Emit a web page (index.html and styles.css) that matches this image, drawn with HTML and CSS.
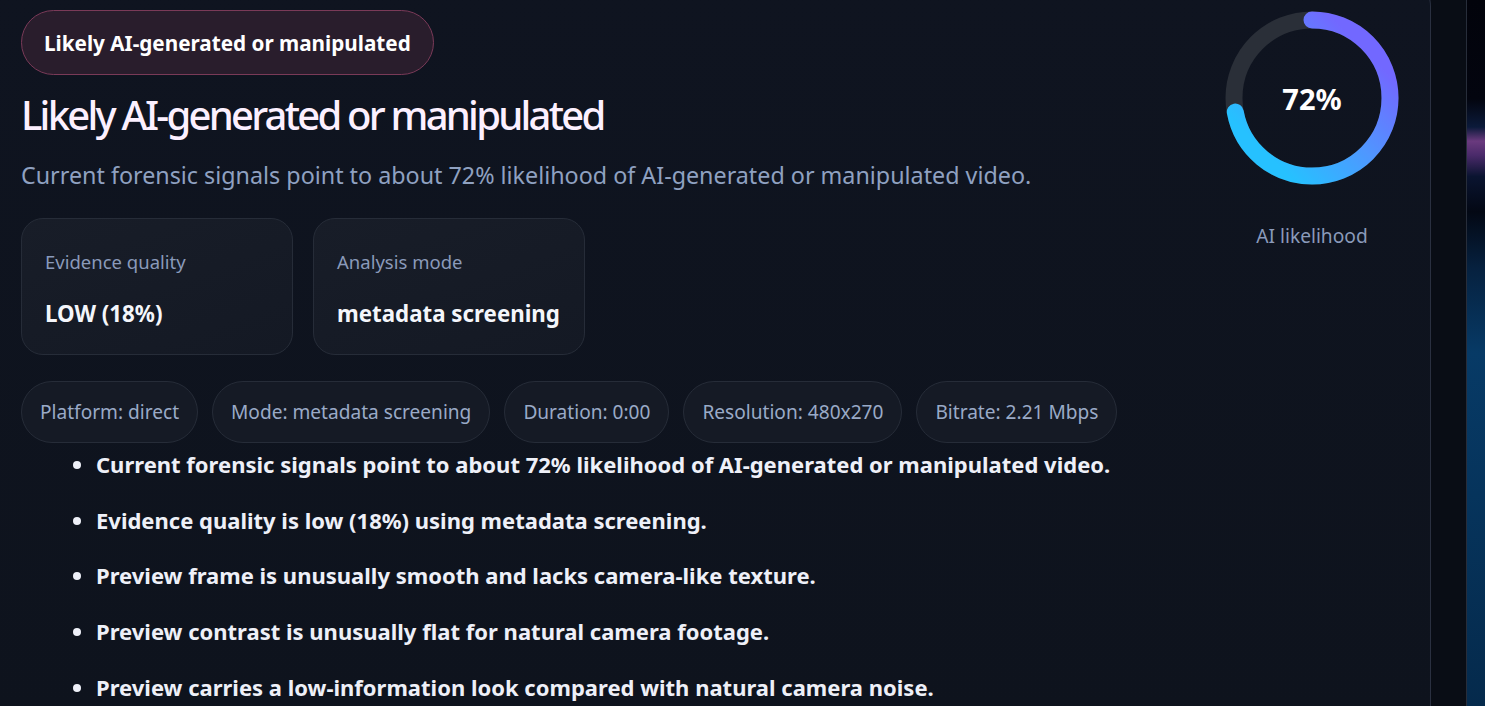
FILE: index.html
```html
<!DOCTYPE html>
<html lang="en">
<head>
<meta charset="utf-8">
<title>Analysis result</title>
<link rel="stylesheet" href="styles.css">
</head>
<body>
<div class="page">
  <section class="panel">
    <div class="main">
      <span class="badge">Likely AI-generated or manipulated</span>
      <h1 class="title">Likely AI-generated or manipulated</h1>
      <p class="lead">Current forensic signals point to about 72% likelihood of AI-generated or manipulated video.</p>
      <div class="stats">
        <div class="stat">
          <div class="stat-label">Evidence quality</div>
          <div class="stat-value">LOW (18%)</div>
        </div>
        <div class="stat">
          <div class="stat-label">Analysis mode</div>
          <div class="stat-value">metadata screening</div>
        </div>
      </div>
      <div class="chips">
        <span class="chip">Platform: direct</span>
        <span class="chip">Mode: metadata screening</span>
        <span class="chip">Duration: 0:00</span>
        <span class="chip">Resolution: 480x270</span>
        <span class="chip">Bitrate: 2.21 Mbps</span>
      </div>
      <ul class="reasons">
        <li>Current forensic signals point to about 72% likelihood of AI-generated or manipulated video.</li>
        <li>Evidence quality is low (18%) using metadata screening.</li>
        <li>Preview frame is unusually smooth and lacks camera-like texture.</li>
        <li>Preview contrast is unusually flat for natural camera footage.</li>
        <li>Preview carries a low-information look compared with natural camera noise.</li>
      </ul>
    </div>
    <aside class="score">
      <div class="ring">
        <svg class="ring-svg" width="174" height="174" viewBox="0 0 174 174" aria-hidden="true">
          <defs>
            <linearGradient id="ringGrad" x1="0.85" y1="0.2" x2="0.2" y2="0.85">
              <stop offset="0" stop-color="#7268ff"/>
              <stop offset="0.5" stop-color="#4f97ff"/>
              <stop offset="1" stop-color="#26c1ff"/>
            </linearGradient>
          </defs>
          <circle cx="87" cy="87" r="78" fill="none" stroke="#2a2f38" stroke-width="17"/>
          <path d="M87 9 A78 78 0 1 1 87 165 A78 78 0 1 1 87 9" fill="none" stroke="url(#ringGrad)" stroke-width="17" stroke-linecap="round" stroke-dasharray="352.9 1000"/>
        </svg>
        <span class="ring-value">72%</span>
      </div>
      <div class="score-label">AI likelihood</div>
    </aside>
  </section>
  <div class="gutter"></div>
  <div class="preview"></div>
</div>
</body>
</html>
```

FILE: styles.css
```css
* { box-sizing: border-box; }
html, body { margin: 0; padding: 0; }
body {
  background: #0a0e16;
  font-family: "Noto Sans", "Open Sans", sans-serif;
  color: #eef1f8;
}
.page {
  display: flex;
  height: 706px;
  overflow: hidden;
}
.panel {
  flex: 0 0 1431px;
  margin-top: -24px;
  height: 760px;
  display: flex;
  padding: 33px 18px 0 21px;
  background: linear-gradient(180deg, #0f1420 0%, #0e131d 100%);
  border-right: 1px solid #2a3040;
  border-top: 1px solid #2a3040;
  border-top-right-radius: 30px;
}
.main {
  flex: 1;
  min-width: 0;
}
.badge {
  display: inline-flex;
  align-items: center;
  height: 65px;
  padding: 0 22px;
  border-radius: 33px;
  border: 1px solid #7a3a58;
  background: #291d2c;
  color: #ffffff;
  font-weight: 700;
  font-size: 20.7px;
}
.title {
  margin: 16px 0 0;
  font-size: 40px;
  line-height: 48px;
  font-weight: 500;
  letter-spacing: -0.069em;
  color: #fcf0ff;
}
.lead {
  margin: 20px 0 0;
  font-size: 23.3px;
  line-height: 32px;
  color: #8fa1c1;
}
.stats {
  display: flex;
  gap: 20px;
  margin-top: 27px;
}
.stat {
  width: 272px;
  height: 137px;
  padding: 30px 23px 0;
  border-radius: 22px;
  border: 1px solid #262c38;
  background: linear-gradient(160deg, #181d28 0%, #141924 100%);
}
.stat-label {
  font-size: 18.5px;
  line-height: 26px;
  color: #8a9aba;
}
.stat-value {
  margin-top: 25px;
  font-size: 22.3px;
  line-height: 28px;
  font-weight: 700;
  white-space: nowrap;
  color: #f4f6fb;
}
.chips {
  display: flex;
  gap: 14px;
  margin-top: 26px;
}
.chip {
  display: inline-flex;
  align-items: center;
  height: 62px;
  padding: 0 18px;
  border-radius: 31px;
  border: 1px solid #262c38;
  background: #151a25;
  font-size: 19.1px;
  white-space: nowrap;
  color: #9aaac7;
}
.reasons {
  margin: 5px 0 0;
  padding-left: 75px;
  list-style: disc;
}
.reasons li {
  font-size: 22px;
  line-height: 32px;
  font-weight: 700;
  color: #eef0f8;
  margin-bottom: 23.7px;
}
.score {
  flex: 0 0 200px;
  display: flex;
  flex-direction: column;
  align-items: center;
}
.ring {
  position: relative;
  width: 174px;
  height: 174px;
  margin-top: 1px;
}
.ring-svg { display: block; }
.ring-value {
  position: absolute;
  inset: 0;
  display: flex;
  align-items: center;
  justify-content: center;
  font-size: 29px;
  font-weight: 700;
  color: #ffffff;
}
.score-label {
  margin-top: 38px;
  font-size: 19.2px;
  line-height: 26px;
  color: #8a9aba;
}
.gutter {
  flex: 0 0 36px;
  background: #090d15;
  border-right: 1px solid #272d3a;
}
.preview {
  flex: 1;
  background: linear-gradient(180deg, #02030b 0%, #03050f 14%, #0b1a3a 18%, #6a3a7e 20%, #4a2a6a 22%, #0a1430 25%, #030814 30%, #06213f 38%, #073a66 50%, #06345c 70%, #052a4c 100%);
}
```
